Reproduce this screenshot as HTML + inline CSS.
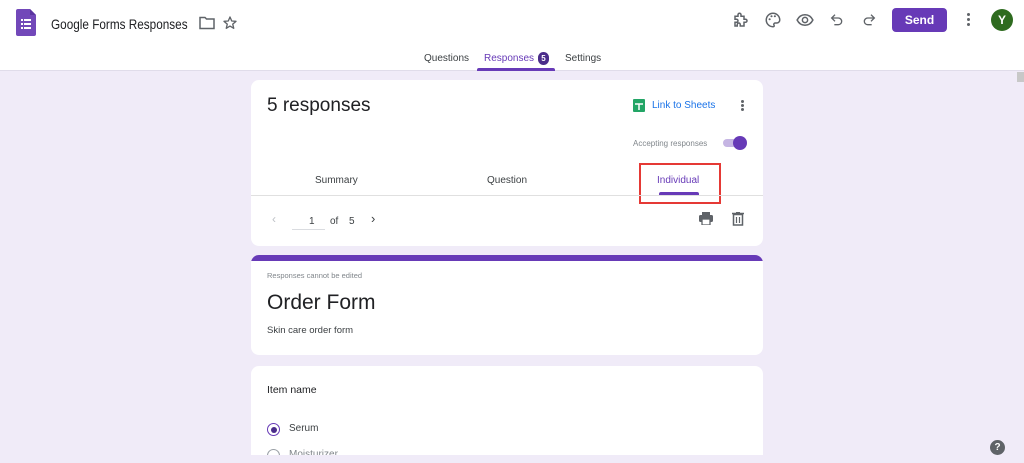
<!DOCTYPE html>
<html><head><meta charset="utf-8"><style>
*{margin:0;padding:0;box-sizing:border-box}
body{width:1024px;height:463px;overflow:hidden;background:#f0ebf8;font-family:"Liberation Sans",sans-serif;position:relative;color:#202124}
.hdr{position:absolute;left:0;top:0;width:1024px;height:71px;background:#fff;border-bottom:1px solid #e0dcea}
.abs{position:absolute}
.card{position:absolute;left:251px;width:512px;background:#fff;border-radius:8px}
svg{display:block}
</style></head><body>
<div class="hdr">
  <svg class="abs" style="left:16px;top:9px" width="20" height="27" viewBox="0 0 20 27"><path d="M2 0h12l6 6v19a2 2 0 0 1-2 2H2a2 2 0 0 1-2-2V2a2 2 0 0 1 2-2z" fill="#7248b9"/><path d="M14 0l6 6h-6z" fill="#5a34a0"/><g fill="#fff"><rect x="5" y="10" width="2" height="2"/><rect x="8" y="10" width="7" height="2"/><rect x="5" y="14" width="2" height="2"/><rect x="8" y="14" width="7" height="2"/><rect x="5" y="18" width="2" height="2"/><rect x="8" y="18" width="7" height="2"/></g></svg>
  <div class="abs" style="left:51px;top:16px;font-size:14px;color:#202124;white-space:nowrap;transform:scaleX(0.84);transform-origin:left top">Google Forms Responses</div>
  <svg class="abs" style="left:199px;top:16px" width="16" height="14" viewBox="0 0 16 14"><path d="M1 1.5h5l1.5 1.5H15v9.5H1z" fill="none" stroke="#5f6368" stroke-width="1.5"/></svg>
  <svg class="abs" style="left:222px;top:15px" width="16" height="16" viewBox="0 0 24 24"><path d="M12 3l2.6 6 6.4.5-4.9 4.2 1.5 6.3L12 16.6 6.4 20l1.5-6.3L3 9.5 9.4 9z" fill="none" stroke="#5f6368" stroke-width="2" stroke-linejoin="round"/></svg>
  <svg class="abs" style="left:732px;top:11px" width="18" height="18" viewBox="0 0 24 24"><path d="M4 7h4V5a2 2 0 0 1 4 0v2h4v4h2a2 2 0 0 1 0 4h-2v5h-5v-2a2 2 0 0 0-4 0v2H4v-5h2a2 2 0 0 0 0-4H4z" fill="none" stroke="#5f6368" stroke-width="2"/></svg>
  <svg class="abs" style="left:764px;top:11px" width="18" height="18" viewBox="0 0 24 24"><path d="M12 3a9 9 0 0 0 0 18c1.5 0 2-1 1.3-2.2-.7-1.2 0-2.8 1.7-2.8H17a4 4 0 0 0 4-4c0-5-4-9-9-9z" fill="none" stroke="#5f6368" stroke-width="2"/><circle cx="7.5" cy="11" r="1.4" fill="#5f6368"/><circle cx="10" cy="7" r="1.4" fill="#5f6368"/><circle cx="14.5" cy="7" r="1.4" fill="#5f6368"/></svg>
  <svg class="abs" style="left:796px;top:11px" width="18" height="18" viewBox="0 0 24 24"><path d="M1.5 12C4 7 8 5 12 5s8 2 10.5 7C20 17 16 19 12 19s-8-2-10.5-7z" fill="none" stroke="#5f6368" stroke-width="2"/><circle cx="12" cy="12" r="3.5" fill="none" stroke="#5f6368" stroke-width="2"/></svg>
  <svg class="abs" style="left:829px;top:11px" width="16" height="18" viewBox="0 0 24 24"><path d="M9 4L4 9l5 5M4 9h10a5 5 0 0 1 0 10H8" fill="none" stroke="#5f6368" stroke-width="2"/></svg>
  <svg class="abs" style="left:861px;top:11px" width="16" height="18" viewBox="0 0 24 24"><path d="M15 4l5 5-5 5M20 9H10a5 5 0 0 0 0 10h6" fill="none" stroke="#5f6368" stroke-width="2"/></svg>
  <div class="abs" style="left:892px;top:8px;width:55px;height:24px;background:#673ab7;border-radius:4px;color:#fff;font-size:12px;font-weight:bold;text-align:center;line-height:24px">Send</div>
  <div class="abs" style="left:967px;top:13px;width:3px;height:3px;border-radius:50%;background:#5f6368;box-shadow:0 5px 0 #5f6368,0 10px 0 #5f6368"></div>
  <div class="abs" style="left:991px;top:9px;width:22px;height:22px;border-radius:50%;background:#2e6b1f;color:#fff;font-size:12px;text-align:center;line-height:22px;font-weight:bold">Y</div>
  <div class="abs" style="left:424px;top:53px;font-size:10px;color:#3c4043">Questions</div>
  <div class="abs" style="left:484px;top:53px;font-size:10px;color:#673ab7">Responses</div>
  <div class="abs" style="left:538px;top:52px;width:11px;height:13px;border-radius:6px;background:#4a2c8a;color:#fff;font-size:8px;text-align:center;line-height:13px;font-weight:bold">5</div>
  <div class="abs" style="left:477px;top:68px;width:78px;height:3px;background:#673ab7;border-radius:2px 2px 0 0"></div>
  <div class="abs" style="left:565px;top:53px;font-size:10px;color:#3c4043">Settings</div>
</div>

<div class="card" style="top:80px;height:166px">
  <div class="abs" style="left:16px;top:15px;font-size:19px;color:#202124">5 responses</div>
  <svg class="abs" style="left:382px;top:19px" width="12" height="13" viewBox="0 0 12 13"><rect width="12" height="13" rx="1" fill="#23a566"/><path d="M2 5h8M6 5v6" stroke="#fff" stroke-width="1.5"/></svg>
  <div class="abs" style="left:401px;top:20px;font-size:10px;color:#1a73e8">Link to Sheets</div>
  <div class="abs" style="left:490px;top:20px;width:3px;height:3px;border-radius:50%;background:#5f6368;box-shadow:0 4px 0 #5f6368,0 8px 0 #5f6368"></div>
  <div class="abs" style="left:382px;top:59px;font-size:8px;color:#80868b">Accepting responses</div>
  <div class="abs" style="left:472px;top:59px;width:22px;height:8px;border-radius:4px;background:#c5b5e3"></div>
  <div class="abs" style="left:482px;top:56px;width:14px;height:14px;border-radius:50%;background:#673ab7"></div>
  <div class="abs" style="left:64px;top:95px;font-size:10px;color:#3c4043">Summary</div>
  <div class="abs" style="left:236px;top:95px;font-size:10px;color:#3c4043">Question</div>
  <div class="abs" style="left:406px;top:95px;font-size:10px;color:#673ab7">Individual</div>
  <div class="abs" style="left:408px;top:112px;width:40px;height:3px;background:#673ab7;border-radius:2px 2px 0 0"></div>
  <div class="abs" style="left:388px;top:83px;width:82px;height:41px;border:2px solid #e53935"></div>
  <div class="abs" style="left:0;top:115px;width:512px;height:1px;background:#e0e0e0"></div>
  <div class="abs" style="left:21px;top:132px;font-size:12px;color:#bdc1c6">‹</div>
  <div class="abs" style="left:41px;top:149px;width:33px;height:1px;background:#dadce0"></div>
  <div class="abs" style="left:58px;top:136px;font-size:10px;color:#3c4043">1</div>
  <div class="abs" style="left:79px;top:136px;font-size:10px;color:#3c4043">of</div>
  <div class="abs" style="left:98px;top:136px;font-size:10px;color:#3c4043">5</div>
  <div class="abs" style="left:120px;top:131px;font-size:13px;color:#3c4043">›</div>
  <svg class="abs" style="left:448px;top:132px" width="14" height="13" viewBox="0 0 14 13"><rect x="3" y="0" width="8" height="3" fill="#5f6368"/><rect x="0" y="3" width="14" height="7" rx="1.5" fill="#5f6368"/><rect x="3" y="7" width="8" height="6" fill="#fff" stroke="#5f6368" stroke-width="1.3"/></svg>
  <svg class="abs" style="left:481px;top:132px" width="12" height="14" viewBox="0 0 12 14"><path d="M0 1.5h12M4 0h4M1.5 2.5h9V13h-9z" fill="none" stroke="#5f6368" stroke-width="1.5"/><path d="M4.5 5v6M7.5 5v6" stroke="#5f6368" stroke-width="1.2"/></svg>
</div>

<div class="card" style="top:255px;height:100px;overflow:hidden">
  <div class="abs" style="left:0;top:0;width:512px;height:6px;background:#673ab7"></div>
  <div class="abs" style="left:16px;top:16px;font-size:7.5px;color:#80868b">Responses cannot be edited</div>
  <div class="abs" style="left:16px;top:36px;font-size:21px;color:#202124">Order Form</div>
  <div class="abs" style="left:16px;top:70px;font-size:9.5px;color:#3c4043">Skin care order form</div>
</div>

<div class="card" style="top:366px;height:89px;overflow:hidden;border-radius:8px 8px 0 0">
  <div class="abs" style="left:16px;top:18px;font-size:10.5px;color:#202124">Item name</div>
  <div class="abs" style="left:16px;top:57px;width:13px;height:13px;border:1.5px solid #673ab7;border-radius:50%"></div>
  <div class="abs" style="left:19.5px;top:60.5px;width:6px;height:6px;background:#4a2c8a;border-radius:50%"></div>
  <div class="abs" style="left:38px;top:57px;font-size:10px;color:#3c4043">Serum</div>
  <div class="abs" style="left:16px;top:83px;width:13px;height:13px;border:1.5px solid #9aa0a6;border-radius:50%"></div>
  <div class="abs" style="left:38px;top:83px;font-size:10px;color:#80868b">Moisturizer</div>
</div>

<div class="abs" style="left:990px;top:440px;width:15px;height:15px;border-radius:50%;background:#5f6368;color:#fff;font-size:10px;font-weight:bold;text-align:center;line-height:15px">?</div>
<div class="abs" style="left:1017px;top:72px;width:7px;height:10px;background:#c8c8c8"></div>
</body></html>
